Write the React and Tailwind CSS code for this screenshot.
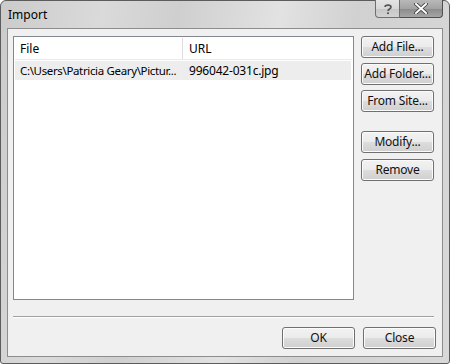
import React from 'react';

const font = "font-['Segoe_UI','Noto_Sans',sans-serif]";

const DlgButton = ({ label, className = '' }) => (
  <button
    className={`h-[22px] w-[73px] shrink-0 rounded-[3px] border border-[#707070] bg-[linear-gradient(#f2f2f2_0%,#ebebeb_50%,#dddddd_51%,#cfcfcf_100%)] text-[12px] leading-none text-[#111] tracking-[-0.2px] shadow-[inset_0_0_0_1px_#fbfbfb] ${className}`}
  >
    {label}
  </button>
);

const HelpIcon = () => (
  <svg width="10" height="12" viewBox="0 0 10 12">
    <path
      d="M2 4 C2 1.5 8 1.5 8 4 C8 6 5 6 5 8"
      fill="none"
      stroke="#555"
      strokeWidth="1.6"
    />
    <rect x="4.1" y="9.3" width="1.8" height="1.8" fill="#555" />
  </svg>
);

const CloseIcon = () => (
  <svg width="14" height="11" viewBox="0 0 14 11">
    <path d="M2 1 L12 10 M12 1 L2 10" stroke="#3a3a3a" strokeWidth="3.6" strokeLinecap="square" />
    <path d="M2 1 L12 10 M12 1 L2 10" stroke="#ffffff" strokeWidth="2" strokeLinecap="square" />
  </svg>
);

export default function App() {
  return (
    <div className={`w-[450px] h-[364px] bg-white ${font}`}>
      <div className="w-[450px] h-[364px] flex flex-col rounded-t-[6px] rounded-b-[3px] border border-[#5c5c5c] bg-[linear-gradient(100deg,#cbcbcb_0%,#dadada_20%,#cfcfcf_35%,#e2e2e2_55%,#d1d1d1_70%,#d8d8d8_100%)]">
        {/* title bar */}
        <div className="h-[27px] shrink-0 flex items-start justify-between pl-[7px] pr-[6px]">
          <span className="mt-[5px] text-[12px] text-black">Import</span>
          <div className="flex -mt-px">
            <div className="w-[25px] h-[18px] flex items-center justify-center rounded-bl-[4px] border border-[#6f6f6f] border-t-0 bg-[linear-gradient(#e4e4e4_0%,#d8d8d8_50%,#c6c6c6_51%,#d2d2d2_100%)]">
              <HelpIcon />
            </div>
            <div className="w-[43px] h-[18px] flex items-center justify-center rounded-br-[4px] border border-l-0 border-[#4f4f4f] border-t-0 bg-[linear-gradient(#b9b9b9_0%,#a3a3a3_50%,#8a8a8a_51%,#a6a6a6_100%)]">
              <CloseIcon />
            </div>
          </div>
        </div>

        {/* client area */}
        <div className="flex-1 mx-[6px] mb-[6px] border border-[#8d8d8d] bg-[#f0f0f0] flex flex-col">
          <div className="flex pt-[7px] pl-[5px] pr-[6px]">
            {/* list */}
            <div className="w-[341px] h-[264px] border border-[#828790] bg-white p-px">
              <div className="flex h-[22px] text-[12px] text-black items-center border-b border-[#eaeaea]">
                <div className="w-[168px] h-full flex items-center pl-[5px] border-r border-[#dcdcdc]">File</div>
                <div className="flex-1 pl-[6px]">URL</div>
              </div>
              <div className="flex h-[19px] mt-px text-[12px] text-black items-center bg-[#ededed] mr-px">
                <div className="w-[168px] pl-[5px] whitespace-nowrap text-[11.5px] tracking-[-0.35px]">
                  C:\Users\Patricia Geary\Pictur...
                </div>
                <div className="flex-1 pl-[6px] whitespace-nowrap tracking-[-0.2px]">996042-031c.jpg</div>
              </div>
            </div>

            {/* side buttons */}
            <div className="ml-[7px] flex flex-col">
              <DlgButton label="Add File..." />
              <DlgButton label="Add Folder..." className="mt-[5px]" />
              <DlgButton label="From Site..." className="mt-[5px]" />
              <DlgButton label="Modify..." className="mt-[19px]" />
              <DlgButton label="Remove" className="mt-[6px]" />
            </div>
          </div>

          {/* separator */}
          <div className="mt-[16px] ml-[5px] mr-[8px] h-[2px] border-t border-[#a0a0a0] border-b border-b-white" />

          {/* bottom buttons */}
          <div className="mt-[9px] flex justify-end gap-[8px] pr-[6px]">
            <DlgButton label="OK" />
            <DlgButton label="Close" />
          </div>
        </div>
      </div>
    </div>
  );
}
